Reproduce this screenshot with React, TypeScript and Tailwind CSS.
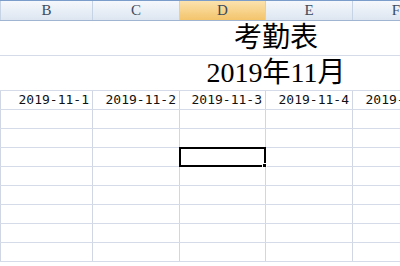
import React from "react";

const cols = [
  { key: "B", w: "w-[93px] border-l", date: "2019-11-1" },
  { key: "C", w: "w-[87px]", date: "2019-11-2" },
  { key: "D", w: "w-[86px]", date: "2019-11-3" },
  { key: "E", w: "w-[87px]", date: "2019-11-4" },
  { key: "F", w: "w-[87px]", date: "2019-11-5" },
];

const serif = { fontFamily: '"Liberation Serif", "Noto Sans CJK SC", serif' };

function HeaderRow() {
  return (
    <div className="flex h-[21px] border-t border-[#7a9ccb] border-b border-b-[#9fb5d2]">
      {cols.map((c) => (
        <div
          key={c.key}
          className={`${c.w} shrink-0 flex items-center justify-center border-r border-r-[#c6d3e4] border-l-[#c6d3e4] text-[15px] text-[#3c4a5e] ${
            c.key === "D"
              ? "bg-gradient-to-b from-[#fbe2ad] to-[#f3c46a]"
              : "bg-gradient-to-b from-[#f5f8fc] to-[#dde6f1]"
          }`}
          style={serif}
        >
          {c.key}
        </div>
      ))}
    </div>
  );
}

function TitleRow({ text }: { text: string }) {
  return (
    <div className="h-[35px] border-b border-[#d5dbe8] overflow-hidden">
      <div
        className="w-[552px] h-full flex items-center justify-center text-[28px] leading-none text-black"
        style={serif}
      >
        {text}
      </div>
    </div>
  );
}

function GridRow({ dates, selected }: { dates?: boolean; selected?: boolean }) {
  return (
    <div className="flex h-[19px] border-b border-[#d5dbe8]">
      {cols.map((c) => (
        <div
          key={c.key}
          className={`${c.w} shrink-0 relative border-r border-[#d0d6e4] flex items-center justify-end pr-[3px] text-[13px] text-[#111]`}
          style={{ fontFamily: '"DejaVu Sans Mono", monospace' }}
        >
          {dates ? c.date : null}
          {selected && c.key === "D" && (
            <div className="absolute -top-[1px] -left-[1px] -right-[1px] -bottom-[1px] border-2 border-black">
              <div className="absolute -right-[3px] -bottom-[3px] w-[5px] h-[5px] bg-black border border-white" />
            </div>
          )}
        </div>
      ))}
    </div>
  );
}

export default function App() {
  return (
    <div className="w-[400px] h-[266px] overflow-hidden bg-white">
      <div className="w-[440px]">
        <HeaderRow />
        <TitleRow text="考勤表" />
        <TitleRow text="2019年11月" />
        <GridRow dates />
        <GridRow />
        <GridRow />
        <GridRow selected />
        <GridRow />
        <GridRow />
        <GridRow />
        <GridRow />
        <GridRow />
      </div>
    </div>
  );
}
